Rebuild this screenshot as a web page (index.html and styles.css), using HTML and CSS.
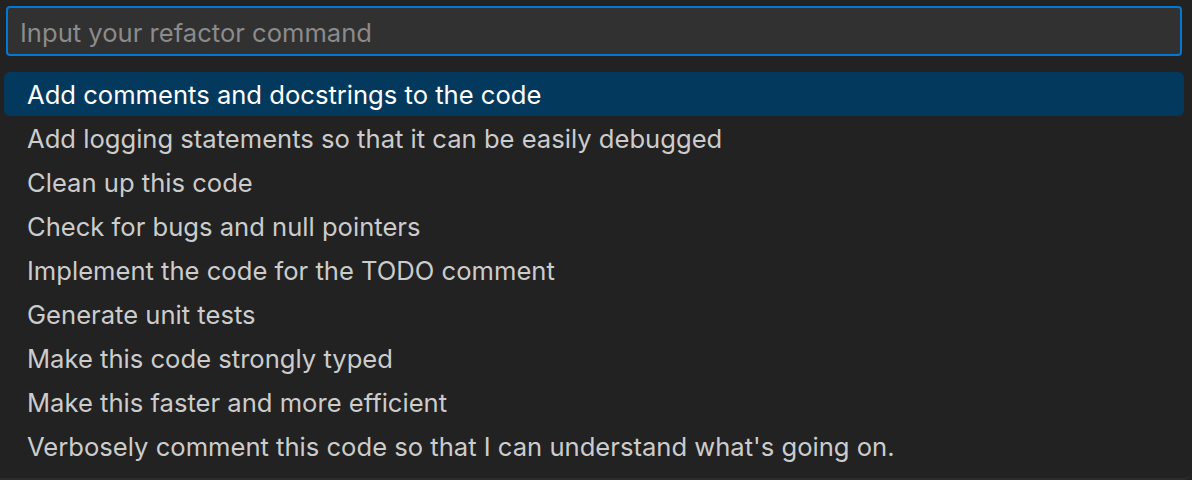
FILE: index.html
```html
<!DOCTYPE html>
<html>
<head>
<meta charset="utf-8">
<link rel="stylesheet" href="styles.css">
</head>
<body>
<div class="widget">
  <div class="input-wrap">
    <input class="input" type="text" placeholder="Input your refactor command">
  </div>
  <ul class="list">
    <li class="item selected">Add comments and docstrings to the code</li>
    <li class="item">Add logging statements so that it can be easily debugged</li>
    <li class="item">Clean up this code</li>
    <li class="item">Check for bugs and null pointers</li>
    <li class="item">Implement the code for the TODO comment</li>
    <li class="item">Generate unit tests</li>
    <li class="item">Make this code strongly typed</li>
    <li class="item">Make this faster and more efficient</li>
    <li class="item">Verbosely comment this code so that I can understand what's going on.</li>
  </ul>
</div>
</body>
</html>
```

FILE: styles.css
```css
html, body {
  margin: 0;
  padding: 0;
  background: #222222;
  height: 480px;
  overflow: hidden;
}
.widget {
  box-sizing: border-box;
  height: 480px;
  background: #222222;
  border-bottom: 2px solid #2c2c2c;
  border-bottom-right-radius: 8px;
  font-family: Inter, "Noto Sans", sans-serif;
  display: flex;
  flex-direction: column;
}
.input-wrap {
  padding: 6px 10px 0 6px;
}
.input {
  box-sizing: border-box;
  width: 100%;
  height: 50px;
  margin: 0;
  background: #313131;
  border: 2px solid #0078d4;
  border-radius: 4px;
  color: #cccccc;
  font-family: inherit;
  font-size: 25.6px;
  padding: 2px 12px 0 12px;
  outline: none;
}
.input::placeholder {
  color: #8b8b8b;
}
.list {
  list-style: none;
  margin: 16px 0 0 0;
  padding: 0 8px 0 4px;
}
.item {
  box-sizing: border-box;
  height: 44px;
  line-height: 44px;
  padding: 1px 0 0 23px;
  color: #cccccc;
  font-size: 25.6px;
  border-radius: 6px;
  white-space: nowrap;
}
.item.selected {
  background: #04395e;
  color: #ffffff;
}
```
